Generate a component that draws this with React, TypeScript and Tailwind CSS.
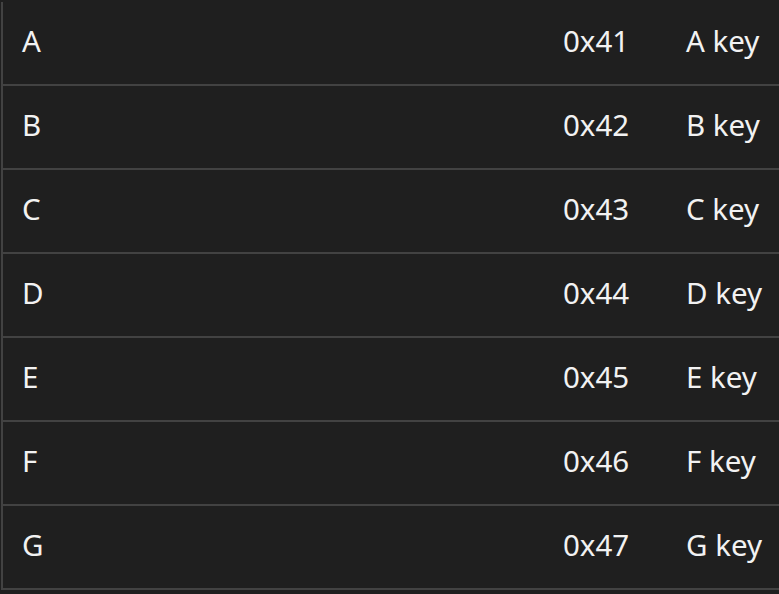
import React from "react";

const rows = [
  ["A", "0x41", "A key"],
  ["B", "0x42", "B key"],
  ["C", "0x43", "C key"],
  ["D", "0x44", "D key"],
  ["E", "0x45", "E key"],
  ["F", "0x46", "F key"],
  ["G", "0x47", "G key"],
];

export default function App() {
  return (
    <div
      className="w-[779px] h-[594px] overflow-hidden bg-[#1f1f1f] text-[#f2f2f2] pt-[2px]"
      style={{ fontFamily: '"Noto Sans", "Open Sans", sans-serif' }}
    >
      <div className="ml-px border-l-2 border-[#424242]">
        {rows.map(([a, b, c]) => (
          <div
            key={a}
            className="flex items-center h-[84px] pb-[5px] border-b-2 border-[#424242] text-[29.5px] leading-none"
          >
            <div className="w-[560px] pl-[19px]">{a}</div>
            <div className="w-[123px]">{b}</div>
            <div className="whitespace-nowrap">{c}</div>
          </div>
        ))}
      </div>
    </div>
  );
}
